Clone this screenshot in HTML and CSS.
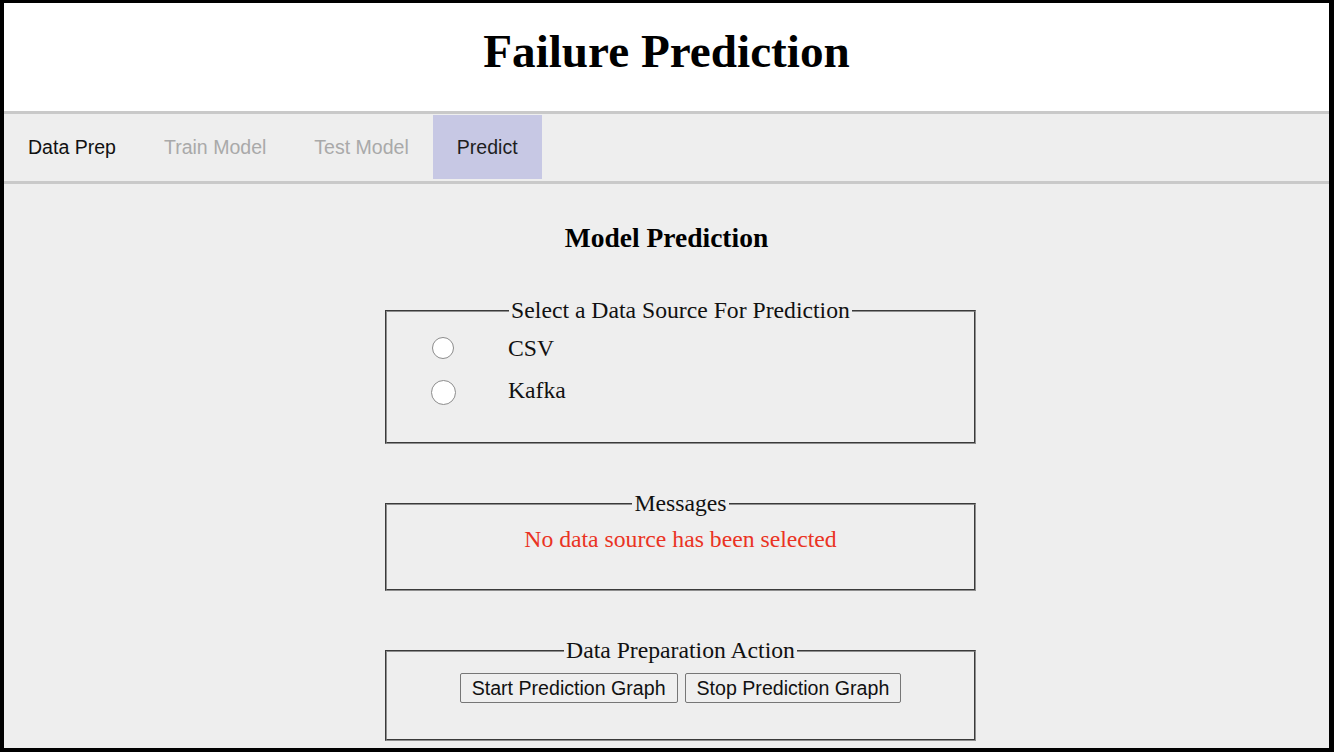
FILE: index.html
```html
<!DOCTYPE html>
<html lang="en">
<head>
<meta charset="utf-8">
<title>Failure Prediction</title>
<link rel="stylesheet" href="styles.css">
</head>
<body>
<div class="app">
  <header class="header">
    <h1 class="title">Failure Prediction</h1>
  </header>
  <nav class="tabs">
    <div class="tab tab-enabled">Data Prep</div>
    <div class="tab tab-disabled">Train Model</div>
    <div class="tab tab-disabled">Test Model</div>
    <div class="tab tab-active">Predict</div>
  </nav>
  <main class="content">
    <h3 class="section-title">Model Prediction</h3>

    <fieldset class="box box-source">
      <legend class="legend">Select a Data Source For Prediction</legend>
      <div class="radio-row">
        <span class="radio-cell"><input class="radio" type="radio" name="src" id="csv"></span>
        <label class="radio-label" for="csv">CSV</label>
      </div>
      <div class="radio-row">
        <span class="radio-cell"><input class="radio radio-big" type="radio" name="src" id="kafka"></span>
        <label class="radio-label" for="kafka">Kafka</label>
      </div>
    </fieldset>

    <fieldset class="box box-messages">
      <legend class="legend">Messages</legend>
      <p class="message">No data source has been selected</p>
    </fieldset>

    <fieldset class="box box-actions">
      <legend class="legend">Data Preparation Action</legend>
      <div class="buttons">
        <button class="btn" type="button">Start Prediction Graph</button>
        <button class="btn" type="button">Stop Prediction Graph</button>
      </div>
    </fieldset>
  </main>
</div>
</body>
</html>
```

FILE: styles.css
```css
html, body {
  margin: 0;
}

body {
  height: 752px;
  box-sizing: border-box;
  padding: 3px 5px 4px 4px;
  background: #000;
  font-family: "Liberation Serif", "Times New Roman", serif;
  overflow: hidden;
}

.app {
  height: 100%;
  background: #eeeeee;
  overflow: hidden;
}

.header {
  height: 108px;
  box-sizing: border-box;
  background: #ffffff;
  padding-top: 22px;
}

.title {
  margin: 0;
  text-align: center;
  font-size: 47.2px;
  line-height: 52px;
  font-weight: bold;
  color: #000;
}

.tabs {
  display: flex;
  border-top: 3px solid #c9c9c9;
  border-bottom: 3px solid #c9c9c9;
  padding: 1px 0 2px;
  background: #eeeeee;
}

.tab {
  height: 64px;
  display: flex;
  align-items: center;
  padding: 0 24px;
  font-family: "Liberation Sans", Arial, sans-serif;
  font-size: 19.55px;
}

.tab-enabled {
  color: #111;
}

.tab-disabled {
  color: #a9a9a9;
}

.tab-active {
  background: #c7c8e4;
  color: #1e1e1e;
}

.content {
  padding-top: 38px;
}

.section-title {
  margin: 0;
  text-align: center;
  font-size: 27.5px;
  line-height: 32px;
  font-weight: bold;
  color: #000;
}

.box {
  width: 591px;
  box-sizing: border-box;
  margin: 43px 0 0 381px;
  padding: 0;
  border: 2px groove #8e8e8e;
  min-inline-size: 0;
}

.box-messages,
.box-actions {
  margin-top: 46px;
}

.legend {
  margin: 0 auto;
  padding: 0 2px;
  font-size: 23.7px;
  line-height: 27px;
  color: #111;
}

.box-source {
  padding: 2px 0 28px;
}

.radio-row {
  display: grid;
  grid-template-columns: 112px 1fr;
  column-gap: 9px;
  align-items: center;
  height: 44px;
}

.radio-cell {
  display: flex;
  justify-content: center;
  align-items: center;
}

.radio {
  appearance: none;
  -webkit-appearance: none;
  margin: 0;
  width: 22px;
  height: 22px;
  border-radius: 50%;
  border: 1.5px solid #8c8c8c;
  background: #ffffff;
  box-sizing: border-box;
}

.radio-big {
  width: 25px;
  height: 25px;
  margin-top: 0;
}

.radio-label {
  font-size: 23.7px;
  line-height: 27px;
  color: #111;
}

.radio-row + .radio-row .radio-label {
  margin-top: -4px;
}

.box-messages {
  padding: 9px 0 36px;
}

.message {
  margin: 0;
  text-align: center;
  font-size: 23.7px;
  line-height: 27px;
  color: #ea3323;
}

.box-actions {
  padding: 9px 0 36px;
}

.buttons {
  display: flex;
  justify-content: center;
  gap: 7px;
}

.btn {
  height: 30px;
  padding: 0 11px;
  margin: 0;
  font-family: "Liberation Sans", Arial, sans-serif;
  font-size: 19.6px;
  color: #111;
  background: #efefef;
  border: 1px solid #767676;
  border-radius: 2px;
}
```
